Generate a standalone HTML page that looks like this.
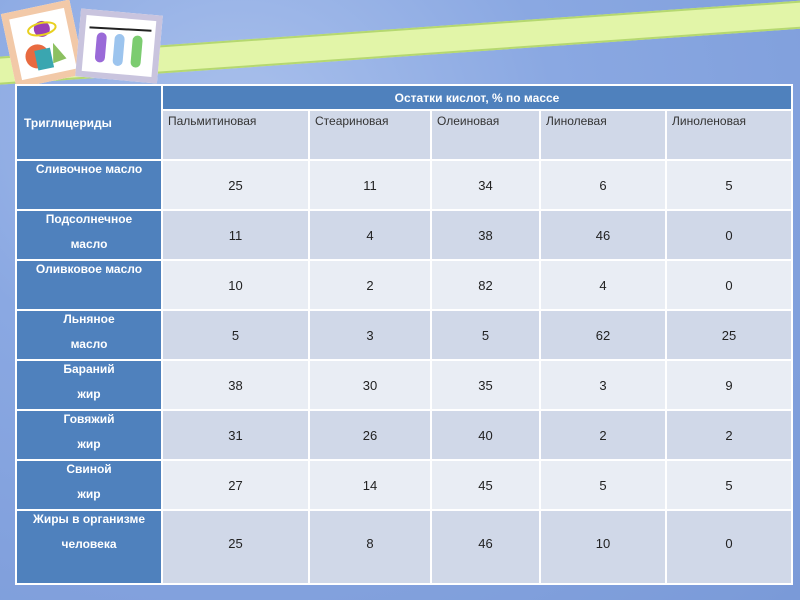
<!DOCTYPE html>
<html><head><meta charset="utf-8"><style>
body{margin:0;width:800px;height:600px;overflow:hidden;position:relative;
background:radial-gradient(ellipse at 30% 20%,#a9c0ec 0%,#8aa8e2 40%,#7a9ad8 100%);font-family:"Liberation Sans",sans-serif}
.band{position:absolute;left:-20px;top:58px;width:860px;height:24px;background:#e2f5a8;border-top:2px solid #b5d870;border-bottom:2px solid #b5d870;transform-origin:0 0;transform:rotate(-4deg)}
.pic1{position:absolute;left:8px;top:6px;width:56px;height:62px;background:#fff;border:7px solid #f2c9a8;transform:rotate(-12deg)}
.pic2{position:absolute;left:78px;top:12px;width:70px;height:56px;background:#fff;border:6px solid #c9c4de;transform:rotate(5deg)}
table{position:absolute;left:15px;top:84px;border-collapse:collapse;width:776px;table-layout:fixed}
td{border:2px solid #fff;padding:0;font-size:13px;color:#222;text-align:center;height:48px;box-sizing:border-box;overflow:hidden}
tr{height:50px}
.h{background:#4f81bd;color:#fff;font-weight:bold}
.l{background:#4f81bd;color:#fff;font-weight:bold;vertical-align:top;font-size:12px;line-height:25px}
.l div{position:relative;top:-4px;height:40px;overflow:visible}
.a td:not(.l){background:#e9edf4}.b td:not(.l){background:#d0d8e8}
.sub td{background:#d0d8e8;vertical-align:top;text-align:left;padding:3px 0 0 5px;font-size:12px;color:#333}
</style></head><body>
<div class="band"></div>
<div class="pic1"><svg width="56" height="62"><circle cx="30" cy="16" r="8" fill="#9b3fb5"/><ellipse cx="30" cy="16" rx="14" ry="6" fill="none" stroke="#e8d020" stroke-width="2"/><circle cx="20" cy="42" r="12" fill="#e86a40"/><rect x="18" y="36" width="16" height="20" fill="#3aa6b0"/><path d="M38 32 L48 50 L34 52Z" fill="#8cc060"/></svg></div>
<div class="pic2"><svg width="70" height="56"><line x1="4" y1="12" x2="66" y2="10" stroke="#222" stroke-width="2"/><rect x="12" y="16" width="10" height="30" rx="5" fill="#9a6ad8"/><rect x="30" y="16" width="10" height="32" rx="5" fill="#9cc4ee"/><rect x="48" y="16" width="10" height="32" rx="5" fill="#7ccc70"/></svg></div>
<table>
<colgroup><col style="width:146px"><col style="width:147px"><col style="width:122px"><col style="width:109px"><col style="width:126px"><col style="width:126px"></colgroup>
<tr style="height:25px"><td class="h" rowspan="2" style="text-align:left;padding-left:7px;font-size:12px;height:75px">Триглицериды</td><td class="h" colspan="5" style="height:25px;font-size:12px;text-align:center">Остатки кислот, % по массе</td></tr>
<tr class="sub"><td>Пальмитиновая</td><td>Стеариновая</td><td>Олеиновая</td><td>Линолевая</td><td>Линоленовая</td></tr>
<tr class="a"><td class="l"><div>Сливочное масло</div></td><td>25</td><td>11</td><td>34</td><td>6</td><td>5</td></tr>
<tr class="b"><td class="l"><div>Подсолнечное<br>масло</div></td><td>11</td><td>4</td><td>38</td><td>46</td><td>0</td></tr>
<tr class="a"><td class="l"><div>Оливковое масло</div></td><td>10</td><td>2</td><td>82</td><td>4</td><td>0</td></tr>
<tr class="b"><td class="l"><div>Льняное<br>масло</div></td><td>5</td><td>3</td><td>5</td><td>62</td><td>25</td></tr>
<tr class="a"><td class="l"><div>Бараний<br>жир</div></td><td>38</td><td>30</td><td>35</td><td>3</td><td>9</td></tr>
<tr class="b"><td class="l"><div>Говяжий<br>жир</div></td><td>31</td><td>26</td><td>40</td><td>2</td><td>2</td></tr>
<tr class="a"><td class="l"><div>Свиной<br>жир</div></td><td>27</td><td>14</td><td>45</td><td>5</td><td>5</td></tr>
<tr class="b" style="height:74px"><td class="l" style="height:74px"><div>Жиры в организме<br>человека</div></td><td style="vertical-align:top;padding-top:25px">25</td><td style="vertical-align:top;padding-top:25px">8</td><td style="vertical-align:top;padding-top:25px">46</td><td style="vertical-align:top;padding-top:25px">10</td><td style="vertical-align:top;padding-top:25px">0</td></tr>
</table>
</body></html>
